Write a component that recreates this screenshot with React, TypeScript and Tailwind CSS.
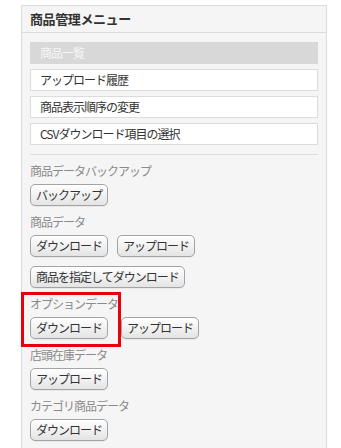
const font = { fontFamily: '"Noto Sans CJK JP", "Noto Sans", sans-serif' };

function Btn({ children, className = "" }: { children: string; className?: string }) {
  return (
    <button
      className={`h-[22px] px-[5px] rounded-[5px] border border-[#a3a3a3] bg-gradient-to-b from-white to-[#e4e4e4] text-[12px] tracking-[-1px] leading-[20px] text-[#333] shadow-[0_1px_0_rgba(0,0,0,0.05)] ${className}`}
    >
      {children}
    </button>
  );
}

function Label({ children }: { children: string }) {
  return (
    <div className="h-[16px] mb-[5px] text-[12px] tracking-[-1px] leading-[16px] text-[#8a8a8a]">
      {children}
    </div>
  );
}

const links = ["アップロード履歴", "商品表示順序の変更", "CSVダウンロード項目の選択"];

export default function App() {
  return (
    <div className="min-h-screen bg-white pt-[5px] pl-[21px]" style={font}>
      <div className="w-[306px] h-[460px] bg-[#f5f5f5] border border-[#dcdcdc] border-b-0">
        <div className="h-[27px] border-b border-[#dcdcdc] px-[8px] text-[13px] font-bold tracking-[-0.4px] leading-[26px] text-[#333]">
          商品管理メニュー
        </div>
        <div className="px-[8px] pt-[9px]">
          <div className="flex flex-col gap-[5px]">
            <div className="h-[22px] bg-[#d8d8d8] px-[10px] text-[12px] tracking-[-1px] leading-[22px] text-[#f7f7f7]">
              商品一覧
            </div>
            {links.map((t) => (
              <div
                key={t}
                className="h-[22px] bg-white border border-[#dcdcdc] px-[9px] text-[12px] tracking-[-1px] leading-[20px] text-[#333]"
              >
                {t}
              </div>
            ))}
          </div>
          <div className="mt-[9px] border-t border-[#dcdcdc]" />
          <div className="pt-[8px] flex flex-col gap-[8px]">
            <div>
              <Label>商品データバックアップ</Label>
              <div className="flex">
                <Btn>バックアップ</Btn>
              </div>
            </div>
            <div>
              <Label>商品データ</Label>
              <div className="flex gap-[9px]">
                <Btn>ダウンロード</Btn>
                <Btn>アップロード</Btn>
              </div>
              <div className="flex mt-[9px]">
                <Btn>商品を指定してダウンロード</Btn>
              </div>
            </div>
            <div className="relative">
              <Label>オプションデータ</Label>
              <div className="flex">
                <Btn>ダウンロード</Btn>
                <Btn className="ml-[13px]">アップロード</Btn>
              </div>
              <div className="absolute left-[-9px] top-[-4px] w-[100px] h-[55px] border-[3px] border-[#e8000b] pointer-events-none" />
            </div>
            <div>
              <Label>店頭在庫データ</Label>
              <div className="flex">
                <Btn>アップロード</Btn>
              </div>
            </div>
            <div>
              <Label>カテゴリ商品データ</Label>
              <div className="flex">
                <Btn>ダウンロード</Btn>
              </div>
            </div>
          </div>
        </div>
      </div>
    </div>
  );
}
